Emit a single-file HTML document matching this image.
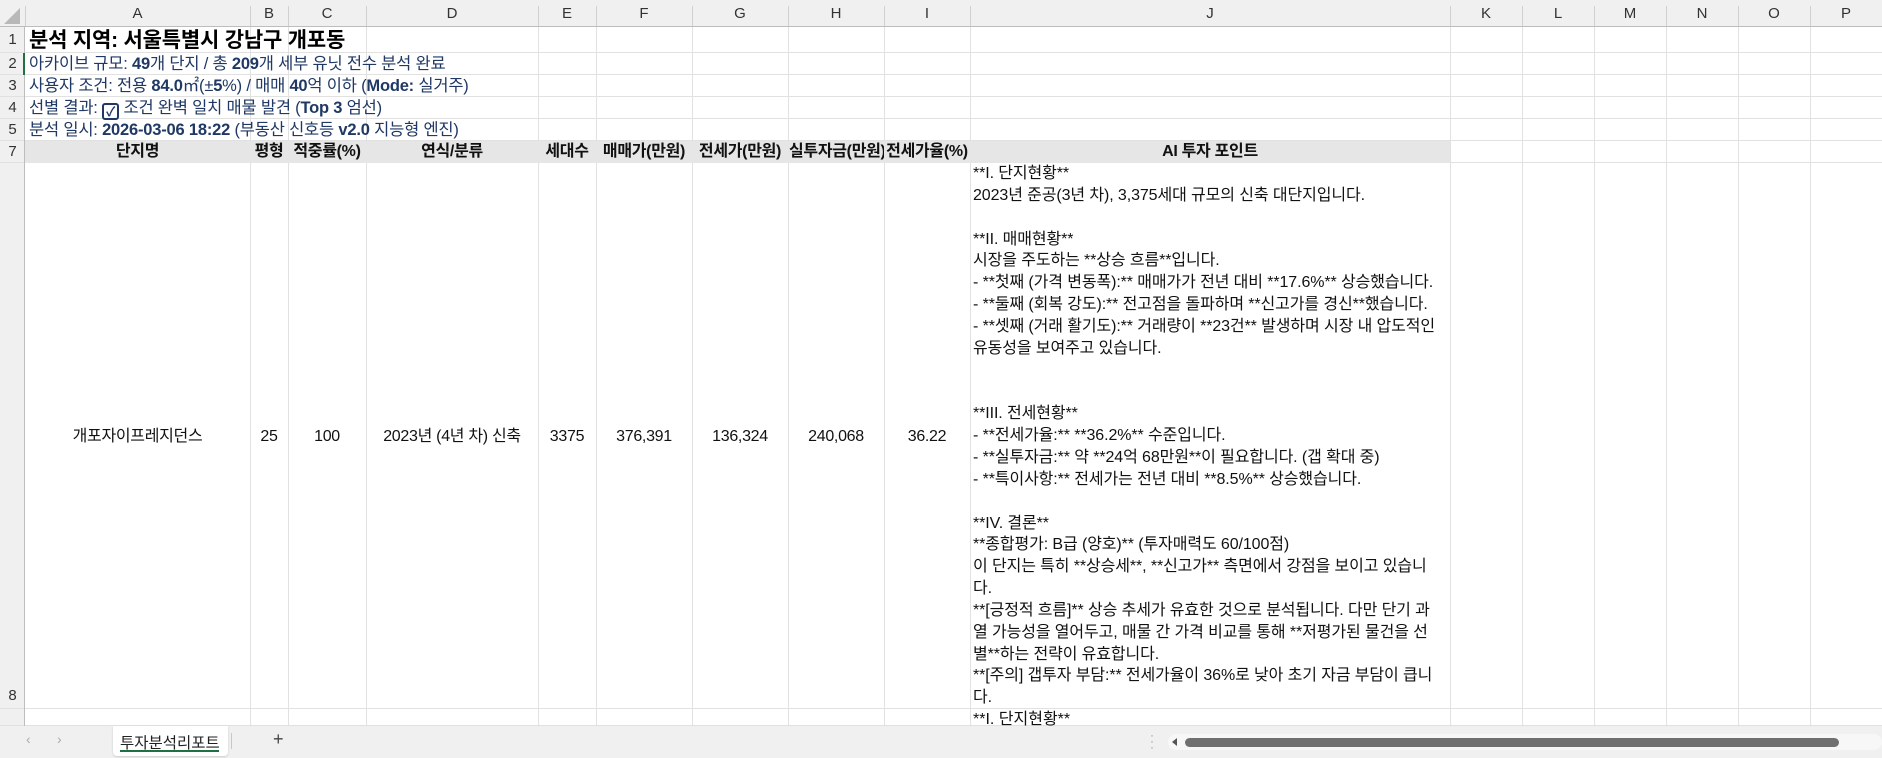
<!DOCTYPE html>
<html><head><meta charset="utf-8">
<style>
*{margin:0;padding:0;box-sizing:border-box}
body{width:1882px;height:758px;overflow:hidden;background:#fff;position:relative;font-family:"Liberation Sans","Noto Sans CJK KR",sans-serif;color:#111}
.a{position:absolute;white-space:nowrap}
.vl{position:absolute;width:1px;background:#e1e1e1}
.hl{position:absolute;height:1px;background:#e1e1e1}
.ch{position:absolute;top:0;height:27px;line-height:27px;text-align:center;font-size:15px;color:#333;background:#f0f0f0}
.rh{position:absolute;left:0;width:25px;text-align:center;font-size:15px;color:#333;background:#f0f0f0}
.info{font-size:16.5px;color:#1f3864;left:29px;line-height:22px;letter-spacing:-0.2px}
.info b{font-weight:bold}
.hd{position:absolute;top:141px;height:22px;line-height:22px;font-size:16px;font-weight:bold;text-align:center;white-space:nowrap;overflow:hidden;letter-spacing:-0.3px}
.dv{position:absolute;top:426px;height:22px;line-height:22px;font-size:16px;text-align:center;white-space:nowrap;letter-spacing:-0.3px}
#j{position:absolute;left:973px;top:163px;width:477px;font-size:16px;line-height:21.85px;white-space:pre;color:#111;letter-spacing:-0.1px}
</style></head><body>
<div id="grid"></div>
<div style="position:absolute;left:25px;top:141px;width:1425px;height:22px;background:#e7e6e6"></div>
<div class="a info" style="top:27px;height:26px;line-height:28px;font-size:21px;font-weight:bold;color:#000">분석 지역: 서울특별시 강남구 개포동</div>
<div class="a info" style="top:53px">아카이브 규모: <b>49</b>개 단지 / 총 <b>209</b>개 세부 유닛 전수 분석 완료</div>
<div class="a info" style="top:75px">사용자 조건: 전용 <b>84.0</b>㎡(±<b>5</b>%) / 매매 <b>40</b>억 이하 (<b>Mode:</b> 실거주)</div>
<div class="a info" style="top:97px">선별 결과: <span style="display:inline-block;width:17px;height:17px;border:2px solid #1f3864;border-radius:3px;vertical-align:-3px;font-size:13px;line-height:13px;text-align:center;font-weight:bold">✓</span> 조건 완벽 일치 매물 발견 (<b>Top 3</b> 엄선)</div>
<div class="a info" style="top:119px">분석 일시: <b>2026-03-06 18:22</b> (부동산 신호등 <b>v2.0</b> 지능형 엔진)</div>

<div class="hd" style="left:25px;width:225px">단지명</div>
<div class="hd" style="left:250px;width:38px">평형</div>
<div class="hd" style="left:288px;width:78px">적중률(%)</div>
<div class="hd" style="left:366px;width:172px">연식/분류</div>
<div class="hd" style="left:538px;width:58px">세대수</div>
<div class="hd" style="left:596px;width:96px">매매가(만원)</div>
<div class="hd" style="left:692px;width:96px">전세가(만원)</div>
<div class="hd" style="left:788px;width:96px;overflow:hidden;text-align:left;padding-left:1px">실투자금(만원)</div>
<div class="hd" style="left:884px;width:86px">전세가율(%)</div>
<div class="hd" style="left:970px;width:480px">AI 투자 포인트</div>

<div class="dv" style="left:25px;width:225px">개포자이프레지던스</div>
<div class="dv" style="left:250px;width:38px">25</div>
<div class="dv" style="left:288px;width:78px">100</div>
<div class="dv" style="left:366px;width:172px">2023년 (4년 차) 신축</div>
<div class="dv" style="left:538px;width:58px">3375</div>
<div class="dv" style="left:596px;width:96px">376,391</div>
<div class="dv" style="left:692px;width:96px">136,324</div>
<div class="dv" style="left:788px;width:96px">240,068</div>
<div class="dv" style="left:884px;width:86px">36.22</div>

<div id="j">**I. 단지현황**
2023년 준공(3년 차), 3,375세대 규모의 신축 대단지입니다.

**II. 매매현황**
시장을 주도하는 **상승 흐름**입니다.
- **첫째 (가격 변동폭):** 매매가가 전년 대비 **17.6%** 상승했습니다.
- **둘째 (회복 강도):** 전고점을 돌파하며 **신고가를 경신**했습니다.
- **셋째 (거래 활기도):** 거래량이 **23건** 발생하며 시장 내 압도적인
유동성을 보여주고 있습니다.


**III. 전세현황**
- **전세가율:** **36.2%** 수준입니다.
- **실투자금:** 약 **24억 68만원**이 필요합니다. (갭 확대 중)
- **특이사항:** 전세가는 전년 대비 **8.5%** 상승했습니다.

**IV. 결론**
**종합평가: B급 (양호)** (투자매력도 60/100점)
이 단지는 특히 **상승세**, **신고가** 측면에서 강점을 보이고 있습니
다.
**[긍정적 흐름]** 상승 추세가 유효한 것으로 분석됩니다. 다만 단기 과
열 가능성을 열어두고, 매물 간 가격 비교를 통해 **저평가된 물건을 선
별**하는 전략이 유효합니다.
**[주의] 갭투자 부담:** 전세가율이 36%로 낮아 초기 자금 부담이 큽니
다.</div>
<div class="a" style="left:973px;top:709px;font-size:16px;line-height:21.85px;height:17px;overflow:hidden">**I. 단지현황**</div>

<div style="position:absolute;left:0;top:726px;width:1882px;height:32px;background:#f0f0f0"></div>
<div class="a" style="left:26px;top:731px;font-size:14px;color:#aaa">‹</div>
<div class="a" style="left:57px;top:731px;font-size:14px;color:#aaa">›</div>
<div style="position:absolute;left:113px;top:726px;width:115px;height:30px;background:#fff;border-radius:0 0 4px 4px;box-shadow:0 1px 2px rgba(0,0,0,.15)"></div>
<div class="a" style="left:120px;top:731px;font-size:15.5px;color:#222">투자분석리포트</div>
<div style="position:absolute;left:120px;top:750px;width:99px;height:2px;background:#1e7145"></div>
<div style="position:absolute;left:231px;top:733px;width:1px;height:16px;background:#c8c8c8"></div>
<div class="a" style="left:273px;top:729px;font-size:18px;color:#444">+</div>
<div class="a" style="left:1150px;top:732px;font-size:12px;color:#999;line-height:6px">·<br>·<br>·</div>
<div style="position:absolute;left:1168px;top:734px;width:714px;height:16px;background:#f7f7f7;border-radius:8px"></div>
<div style="position:absolute;left:1172px;top:738px;width:0;height:0;border-top:4px solid transparent;border-bottom:4px solid transparent;border-right:5px solid #555"></div>
<div style="position:absolute;left:1185px;top:738px;width:654px;height:9px;background:#707070;border-radius:5px"></div>

<script>
var cols=[25,250,288,366,538,596,692,788,884,970,1450,1522,1594,1666,1738,1810,1882];
var L="ABCDEFGHIJKLMNOP";
var rows=[[27,53,"1"],[53,75,"2"],[75,97,"3"],[97,119,"4"],[119,141,"5"],[141,163,"7"],[163,709,"8"],[709,726,""]];
var h="";
h+='<div style="position:absolute;left:0;top:0;width:1882px;height:27px;background:#f0f0f0"></div>';
for(var i=0;i<16;i++){h+='<div class="ch" style="left:'+cols[i]+'px;width:'+(cols[i+1]-cols[i])+'px">'+L[i]+'</div>';
 h+='<div style="position:absolute;left:'+cols[i]+'px;top:6px;width:1px;height:21px;background:#d0d0d0"></div>';}
h+='<div style="position:absolute;left:0;top:26px;width:1882px;height:1px;background:#bdbdbd"></div>';
h+='<div style="position:absolute;left:4px;top:8px;width:0;height:0;border-left:16px solid transparent;border-bottom:16px solid #b8b8b8"></div>';
h+='<div style="position:absolute;left:0;top:27px;width:25px;height:699px;background:#f0f0f0"></div>';
for(var r=0;r<rows.length;r++){var t=rows[r][0],b=rows[r][1];
 var lh = r==6 ? 'top:'+(b-24)+'px;height:22px;line-height:22px' : 'top:'+t+'px;height:'+(b-t)+'px;line-height:'+(b-t)+'px';
 h+='<div class="rh" style="'+lh+'">'+rows[r][2]+'</div>';
 h+='<div class="hl" style="left:0;top:'+(b-1)+'px;width:1882px"></div>';}
h+='<div style="position:absolute;left:24px;top:27px;width:1px;height:699px;background:#bdbdbd"></div>';
h+='<div style="position:absolute;left:23px;top:53px;width:2px;height:22px;background:#1e7145"></div>';
for(var i=1;i<cols.length-1;i++){h+='<div class="vl" style="left:'+cols[i]+'px;top:27px;height:699px"></div>';}
document.getElementById("grid").innerHTML=h;
</script>
</body></html>
